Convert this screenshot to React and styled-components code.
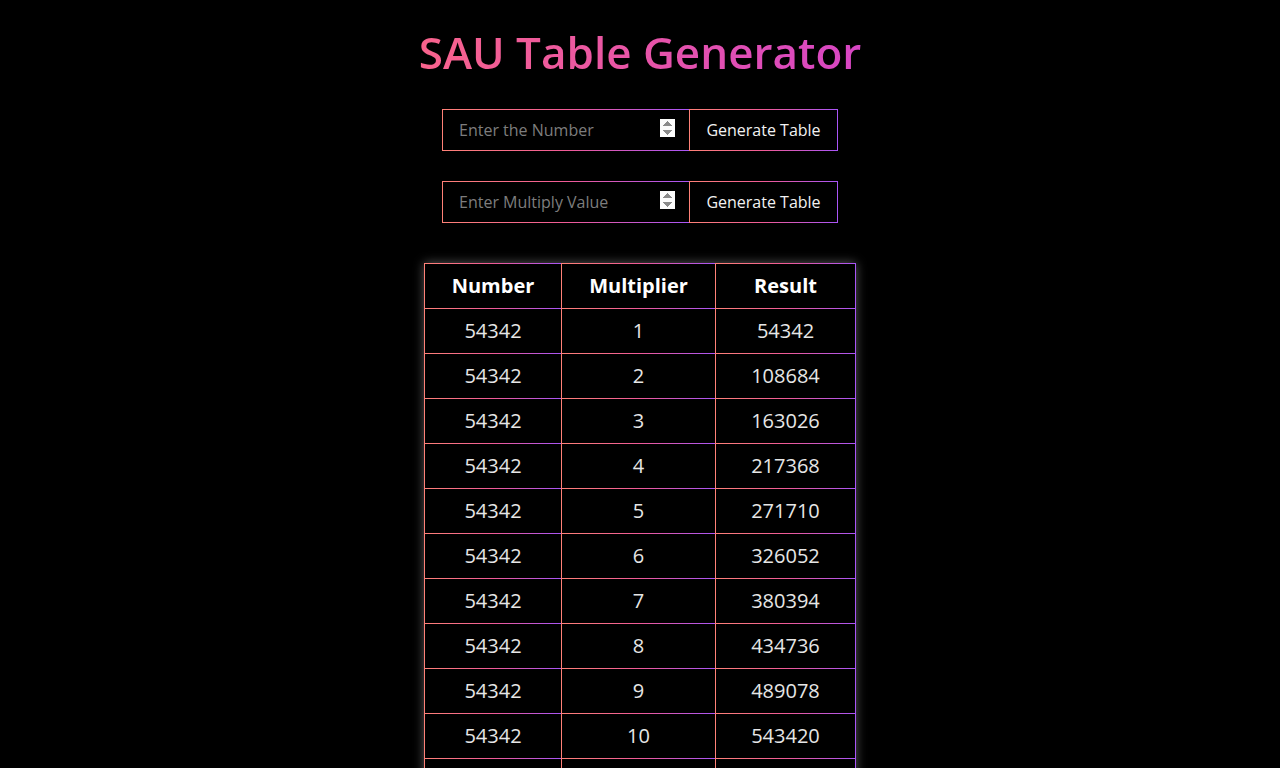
import React, { useState } from 'react'
import styled, { createGlobalStyle } from 'styled-components'

const edge = 'linear-gradient(to right, #ff8177, #f05a96, #a855f7)'

const GlobalStyle = createGlobalStyle`
  * { box-sizing: border-box; }
  body {
    margin: 0;
    background: #000;
    color: #eee;
    font-family: "Open Sans", "DejaVu Sans", sans-serif;
  }
`

const Page = styled.main`
  min-height: 100vh;
  display: flex;
  flex-direction: column;
  align-items: center;
  padding-top: 22px;
`

const Title = styled.h1`
  margin: 0 0 27px;
  font-size: 44px;
  font-weight: 600;
  line-height: 60px;
  background: linear-gradient(to right, #f8638c, #d746c4);
  -webkit-background-clip: text;
  background-clip: text;
  color: transparent;
`

const Form = styled.form`
  display: flex;
  margin-bottom: ${(p) => p.$gap}px;
`

const Input = styled.input`
  width: 247px;
  height: 42px;
  padding: 0 14px 0 16px;
  background: #000;
  color: #ddd;
  font-family: inherit;
  font-size: 16px;
  border: 1px solid;
  border-right: none;
  border-image: ${edge} 1;
  outline: none;
  &::placeholder { color: #7d7d7d; }
  &::-webkit-inner-spin-button {
    opacity: 1;
    height: 18px;
  }
`

const Button = styled.button`
  width: 149px;
  height: 42px;
  background: #000;
  color: #f2f2f2;
  font-family: inherit;
  font-size: 16px;
  border: 1px solid;
  border-image: ${edge} 1;
  cursor: pointer;
`

const Table = styled.table`
  border-spacing: 0;
  box-shadow: 0 0 10px rgba(255, 255, 255, 0.35);
  text-align: center;
`

const Cell = styled.td`
  width: ${(p) => p.$w}px;
  height: ${(p) => (p.as === 'th' ? 46 : 45)}px;
  padding: 0 0 2px;
  font-size: 20px;
  font-weight: ${(p) => (p.as === 'th' ? 700 : 400)};
  color: ${(p) => (p.as === 'th' ? '#fff' : '#e6e6e6')};
  border-style: solid;
  border-width: ${(p) => (p.as === 'th' ? 1 : 0)}px ${(p) => (p.$last ? 1 : 0)}px 1px 1px;
  border-image: ${edge} 1;
`

const widths = [137, 154, 141]

export default function App() {
  const [num] = useState(54342)
  const rows = Array.from({ length: 11 }, (_, i) => i + 1)

  return (
    <Page>
      <GlobalStyle />
      <Title>SAU Table Generator</Title>
      <Form $gap={30} onSubmit={(e) => e.preventDefault()}>
        <Input type="number" placeholder="Enter the Number" />
        <Button>Generate Table</Button>
      </Form>
      <Form $gap={40} onSubmit={(e) => e.preventDefault()}>
        <Input type="number" placeholder="Enter Multiply Value" />
        <Button>Generate Table</Button>
      </Form>
      <Table>
        <thead>
          <tr>
            <Cell as="th" $w={widths[0]}>Number</Cell>
            <Cell as="th" $w={widths[1]}>Multiplier</Cell>
            <Cell as="th" $w={widths[2]} $last>Result</Cell>
          </tr>
        </thead>
        <tbody>
          {rows.map((m) => (
            <tr key={m}>
              <Cell>{num}</Cell>
              <Cell>{m}</Cell>
              <Cell $last>{num * m}</Cell>
            </tr>
          ))}
        </tbody>
      </Table>
    </Page>
  )
}
